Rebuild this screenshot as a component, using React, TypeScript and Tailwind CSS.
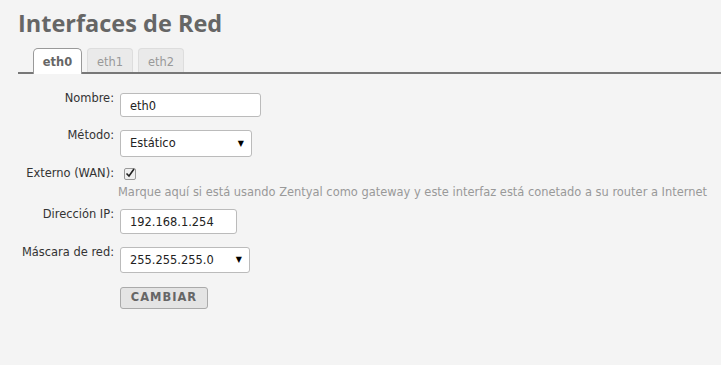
import * as React from "react";

function Tab({ label, active }: { label: string; active?: boolean }) {
  if (active) {
    return (
      <div className="-mb-[2px] flex h-[26px] w-[49px] items-start justify-center rounded-t-[5px] border border-b-0 border-[#999] bg-white pt-[5px] font-bold text-[#666]">
        {label}
      </div>
    );
  }
  return (
    <div className="flex h-[24px] w-[46px] items-start justify-center rounded-t-[4px] border border-b-0 border-[#ddd] bg-[#eaeaea] pt-[5px] text-[#999]">
      {label}
    </div>
  );
}

function Row({ label, children, className }: { label: string; children: React.ReactNode; className?: string }) {
  return (
    <div className={`flex items-start ${className ?? ""}`}>
      <div className="-mt-[2px] w-[114px] shrink-0 text-right leading-[14px] text-[#333]">{label}</div>
      <div className="ml-[6px]">{children}</div>
    </div>
  );
}

function FakeSelect({ value, width, height }: { value: string; width: string; height: string }) {
  return (
    <div className={`flex items-center justify-between rounded-[3px] border border-[#bbb] bg-white pl-[9px] pr-[7px] text-[#222] ${width} ${height}`}>
      <span className="pt-[1px]">{value}</span>
      <span className="text-[8px] leading-none text-black">▼</span>
    </div>
  );
}

export default function App() {
  return (
    <div className="h-[365px] w-full bg-[#f4f4f4] font-['DejaVu_Sans',Verdana,sans-serif] text-[11.45px] text-[#333]">
      <h1 className="pl-[18px] pt-[7px] font-['Open_Sans',sans-serif] text-[23.5px] font-bold leading-[32px] text-[#666]">
        Interfaces de Red
      </h1>

      <div className="ml-[18px] mt-[9px] flex items-end gap-[5px] border-b-2 border-[#777] pl-[15px]">
        <Tab label="eth0" active />
        <Tab label="eth1" />
        <Tab label="eth2" />
      </div>

      <div className="flex flex-col">
        <Row label="Nombre:" className="mt-[19px]">
          <input
            readOnly
            value="eth0"
            className="h-[24px] w-[141px] rounded-[3px] border border-[#bbb] bg-white px-[9px] pt-[1px] text-[11.45px] text-[#222] outline-none"
          />
        </Row>

        <Row label="Método:" className="mt-[13px]">
          <FakeSelect value="Estático" width="w-[132px]" height="h-[27px]" />
        </Row>

        <Row label="Externo (WAN):" className="mt-[11px]">
          <div className="ml-[4px] flex h-[12px] w-[12px] items-center justify-center rounded-[2px] border border-[#999] bg-[#f0f0f0]">
            <svg width="10" height="10" viewBox="0 0 10 10" className="-mt-[2px]">
              <path d="M1.5 5.5 L4 8 L9 1" fill="none" stroke="#222" strokeWidth="1.6" />
            </svg>
          </div>
        </Row>

        <div className="ml-[118px] mt-[5px] leading-[14px] text-[#999]">
          Marque aquí si está usando Zentyal como gateway y este interfaz está conetado a su router a Internet
        </div>

        <Row label="Dirección IP:" className="mt-[10px]">
          <input
            readOnly
            value="192.168.1.254"
            className="h-[25px] w-[117px] rounded-[3px] border border-[#bbb] bg-white px-[9px] pt-[1px] text-[11.45px] text-[#222] outline-none"
          />
        </Row>

        <Row label="Máscara de red:" className="mt-[13px]">
          <FakeSelect value="255.255.255.0" width="w-[130px]" height="h-[26px]" />
        </Row>

        <div className="ml-[120px] mt-[14px]">
          <button className="h-[22px] w-[88px] rounded-[3px] border border-[#aaa] bg-[#e4e4e4] text-[11.45px] font-bold tracking-[1px] text-[#666]">
            CAMBIAR
          </button>
        </div>
      </div>
    </div>
  );
}
